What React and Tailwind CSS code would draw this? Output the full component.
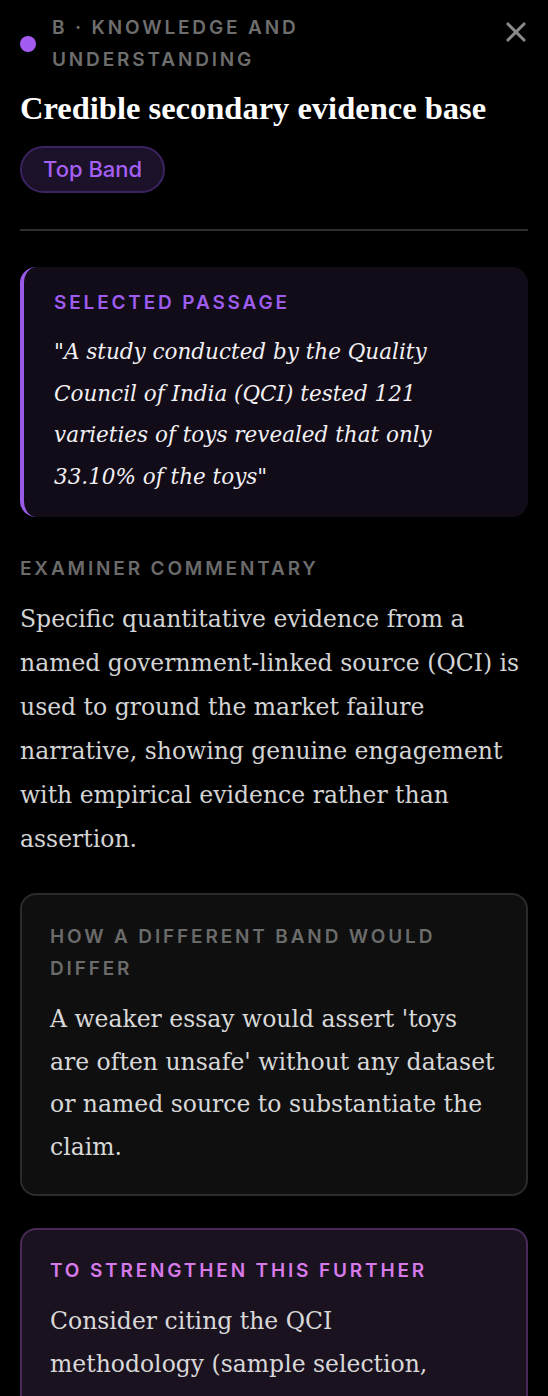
import { X } from 'lucide-react';

const inter = { fontFamily: 'Inter, "Liberation Sans", sans-serif' };

function Label({ children, className = '' }) {
  return (
    <div
      className={`text-[19px] font-semibold uppercase tracking-[0.15em] leading-[32px] ${className}`}
      style={inter}
    >
      {children}
    </div>
  );
}

export default function App() {
  return (
    <div className="min-h-screen bg-black px-5 pt-3 pb-10 font-['DejaVu_Serif',serif]">
      <div className="flex items-start justify-between">
        <div className="flex items-center gap-4">
          <span className="h-4 w-4 shrink-0 rounded-full bg-[#a35cf2]" />
          <Label className="text-[#6e6e6e]">B · Knowledge and Understanding</Label>
        </div>
        <button className="-mr-1 mt-[4px] text-[#8a8a8a]">
          <X size={32} strokeWidth={2.3} />
        </button>
      </div>

      <h1 className="mt-[12px] font-['Liberation_Serif',serif] text-[32.5px] font-bold leading-[40px] text-white">
        Credible secondary evidence base
      </h1>

      <div className="mt-[18px]">
        <span
          className="inline-flex h-[47px] items-center rounded-full border-2 border-[#3b2362] bg-[#1b1128] px-[21px] text-[22px] font-medium text-[#a55ff2]"
          style={inter}
        >
          Top Band
        </span>
      </div>

      <div className="mt-[36px] h-[2px] bg-[#2e2e2e]" />

      <div className="mt-9 rounded-2xl border-l-4 border-[#9a5ae8] bg-[#110c17] pb-[20px] pl-[30px] pr-6 pt-[20px]">
        <Label className="text-[#9e5cef]">Selected Passage</Label>
        <p className="mt-[12px] text-[21.5px] italic leading-[41.5px] text-[#f2f0f4]">
          "A study conducted by the Quality Council of India (QCI) tested 121 varieties of toys revealed that only 33.10% of the toys"
        </p>
      </div>

      <Label className="mt-9 text-[#6b6b6b]">Examiner Commentary</Label>
      <p className="mt-[12px] text-[23.5px] leading-[44px] text-[#d4d4d4]">
        Specific quantitative evidence from a named government-linked source (QCI) is used to ground the market failure narrative, showing genuine engagement with empirical evidence rather than assertion.
      </p>

      <div className="mt-[32px] rounded-2xl border-2 border-[#2b2b2b] bg-[#0f0f0f] px-7 pb-[25px] pt-[26px]">
        <Label className="text-[#6b6b6b]">How a different band would differ</Label>
        <p className="mt-[13px] text-[23.5px] leading-[42.7px] text-[#d8d8d8]">
          A weaker essay would assert 'toys are often unsafe' without any dataset or named source to substantiate the claim.
        </p>
      </div>

      <div className="mt-8 rounded-2xl border-2 border-[#472a58] bg-[#1b1220] px-7 pb-[25px] pt-[25px]">
        <Label className="text-[#d67ae9]">To strengthen this further</Label>
        <p className="mt-[13px] text-[23.5px] leading-[43px] text-[#d8d8d8]">
          Consider citing the QCI methodology{'\u00a0'}(sample selection, testing standards) to reinforce the credibility of this figure and pre-empt questions about representativeness.
        </p>
      </div>
    </div>
  );
}
